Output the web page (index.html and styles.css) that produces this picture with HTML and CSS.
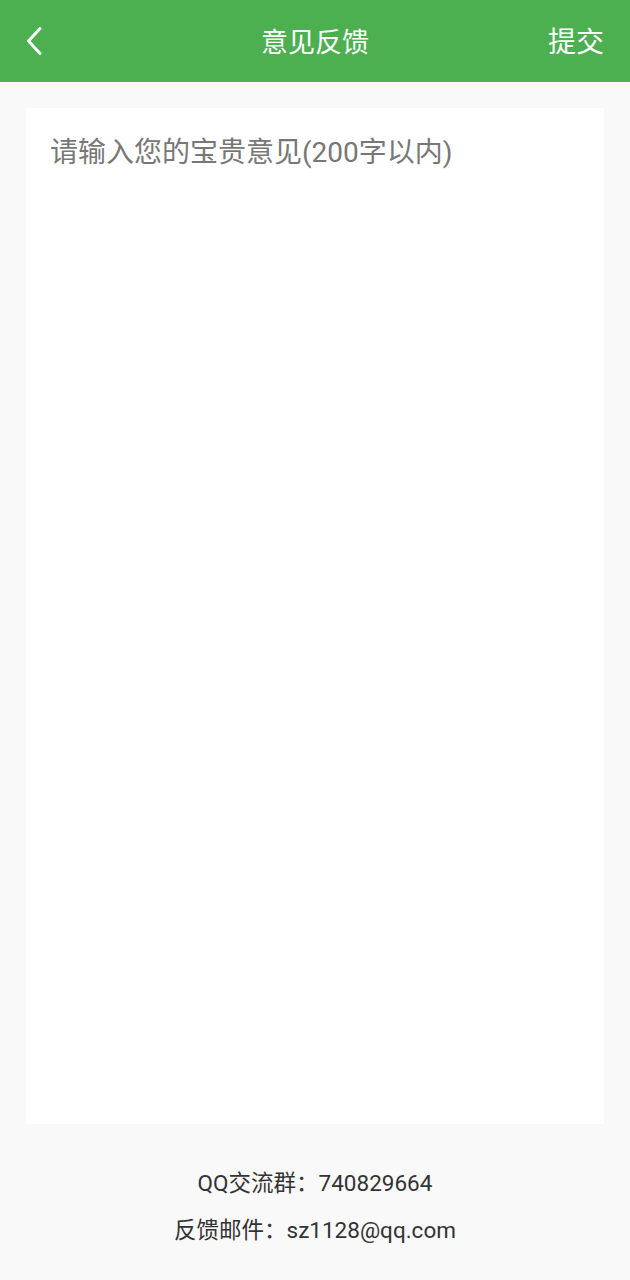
FILE: index.html
```html
<!DOCTYPE html>
<html lang="zh-CN">
<head>
<meta charset="utf-8">
<title>意见反馈</title>
<link rel="stylesheet" href="styles.css">
</head>
<body>
<header class="topbar">
  <div class="back">
    <svg width="16" height="28" viewBox="0 0 16 28" aria-hidden="true">
      <path d="M14 1.5 L2.5 14 L14 26.5" fill="none" stroke="#fff" stroke-width="3" stroke-linecap="round" stroke-linejoin="round"/>
    </svg>
  </div>
  <div class="title">意见反馈</div>
  <div class="submit">提交</div>
</header>
<main class="content">
  <textarea class="feedback" placeholder="请输入您的宝贵意见(200字以内)" maxlength="200"></textarea>
</main>
<footer class="info">
  <div class="line">QQ交流群：740829664</div>
  <div class="line">反馈邮件：sz1128@qq.com</div>
</footer>
</body>
</html>
```
FILE: styles.css
```css
html, body {
  margin: 0;
  padding: 0;
}
body {
  background: #f9f9f9;
  font-family: Roboto, "Noto Sans CJK SC", sans-serif;
  width: 630px;
  height: 1280px;
  overflow: hidden;
}
.topbar {
  height: 82px;
  background: #4caf50;
  display: grid;
  grid-template-columns: 1fr auto 1fr;
  align-items: center;
  padding: 0 26px;
  color: #fff;
}
.back {
  display: flex;
  align-items: center;
  margin-top: 0;
}
.title {
  font-size: 27px;
  line-height: 40px;
  margin-top: 4px;
}
.submit {
  justify-self: end;
  font-size: 28px;
  line-height: 40px;
  margin-top: 4px;
}
.content {
  padding: 26px 26px 0;
}
.feedback {
  display: block;
  box-sizing: border-box;
  width: 578px;
  height: 1016px;
  margin: 0;
  border: none;
  outline: none;
  resize: none;
  background: #fff;
  padding: 25px 24px;
  font-family: Roboto, "Noto Sans CJK SC", sans-serif;
  font-size: 28px;
  line-height: 40px;
  color: #333;
}
.feedback::placeholder {
  color: #777;
  opacity: 1;
}
.info {
  margin-top: 36px;
  text-align: center;
  color: #333;
  font-size: 22.5px;
}
.line {
  line-height: 47px;
}
```
